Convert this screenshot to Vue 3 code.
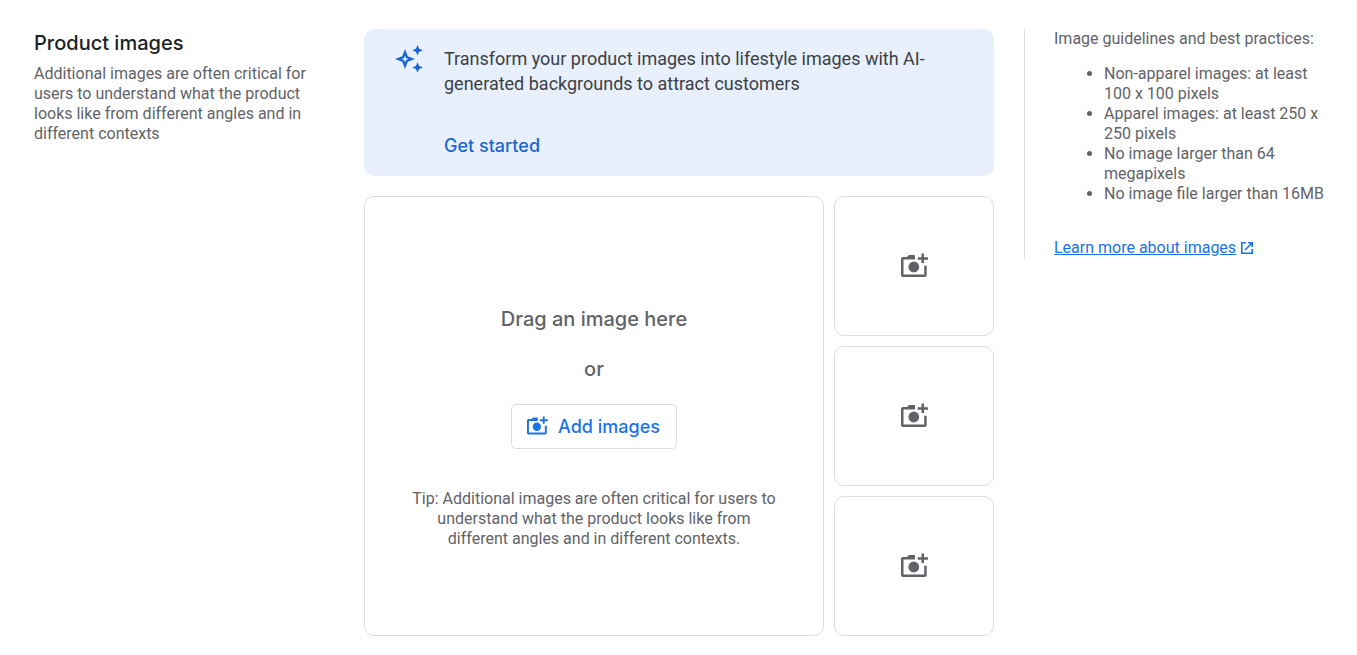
<script setup>
import { h } from 'vue'

const guidelines = [
  'Non-apparel images: at least 100 x 100 pixels',
  'Apparel images: at least 250 x 250 pixels',
  'No image larger than 64 megapixels',
  'No image file larger than 16MB',
]

const AddPhotoIcon = () =>
  h('svg', { viewBox: '0 0 28 26', 'aria-hidden': 'true' }, [
    h('path', {
      fill: 'currentColor',
      d: 'M3 4H7L9 2H15V6.5H3.5V21.5H24.2V12.7H26.7V22Q26.7 24 24.7 24H3Q1 24 1 22V6Q1 4 3 4Z',
    }),
    h('path', { fill: 'currentColor', d: 'M21.5 0.5H24V4.2H28V6.7H24V10H21.5V6.7H17.7V4.2H21.5Z' }),
    h('circle', { fill: 'currentColor', cx: 13.8, cy: 14, r: 5.4 }),
  ])
</script>

<template>
  <main class="page">
    <section class="intro">
      <h1>Product images</h1>
      <p>Additional images are often critical for users to understand what the product looks like from different angles and in different contexts</p>
    </section>

    <section class="content">
      <div class="banner">
        <svg class="sparkle" viewBox="0 0 30 30" aria-hidden="true">
          <path fill="currentColor" fill-rule="evenodd" d="M11 5L13.8 12.2L21 15L13.8 17.8L11 25L8.2 17.8L1 15L8.2 12.2ZM11 11.8L10 14L7.8 15L10 16L11 18.2L12 16L14.2 15L12 14Z" />
          <path fill="currentColor" d="M23.5 1L25.1 4.8L29 6.3L25.1 7.8L23.5 11.6L21.9 7.8L18.2 6.3L21.9 4.8ZM23.5 18.2L25.1 22L29 23.5L25.1 25L23.5 28.8L21.9 25L18.2 23.5L21.9 22Z" />
        </svg>
        <div class="banner-body">
          <p>Transform your product images into lifestyle images with AI-generated backgrounds to attract customers</p>
          <button type="button" class="start">Get started</button>
        </div>
      </div>

      <div class="uploads">
        <div class="drop">
          <p class="prompt">Drag an image here</p>
          <p class="prompt">or</p>
          <button type="button" class="add"><AddPhotoIcon class="icon-small" />Add images</button>
          <p class="tip">Tip: Additional images are often critical for users to understand what the product looks like from different angles and in different contexts.</p>
        </div>
        <button v-for="n in 3" :key="n" type="button" class="slot" :aria-label="`Add image ${n}`">
          <AddPhotoIcon class="icon-large" />
        </button>
      </div>
    </section>

    <aside class="guide">
      <p>Image guidelines and best practices:</p>
      <ul>
        <li v-for="item in guidelines" :key="item">{{ item }}</li>
      </ul>
      <a href="#"><span>Learn more about images</span><svg viewBox="0 0 14 14" aria-hidden="true"><path d="M6 1.8H1.8V12.2H12.2V8M8 1.8H12.2V6M12 2L5 9" fill="none" stroke="currentColor" stroke-width="1.6" /></svg></a>
    </aside>
  </main>
</template>

<style>
body {
  margin: 0;
  background: #fff;
}
</style>

<style scoped>
.page {
  display: grid;
  grid-template-columns: 300px minmax(0, 1fr) 303px;
  column-gap: 30px;
  align-items: start;
  padding: 29px 30px 19px 34px;
  font-family: Roboto, "Liberation Sans", sans-serif;
  font-size: 16px;
  line-height: 20px;
  color: #5f6368;
}
h1,
p,
ul {
  margin: 0;
}
button {
  padding: 0;
  border: 0;
  background: none;
  cursor: pointer;
}
h1,
.prompt,
.start,
.add {
  font-family: "Google Sans", Inter, sans-serif;
  font-weight: 500;
}
h1 {
  padding-top: 2px;
  font-size: 20px;
  line-height: 25px;
  color: #202124;
}
.intro p {
  margin-top: 8px;
  padding-right: 20px;
}
.banner {
  display: flex;
  gap: 20px;
  padding: 15px 30px;
  border-radius: 10px;
  background: #e8f0fe;
}
.sparkle {
  flex: none;
  width: 30px;
  height: 30px;
  color: #1967d2;
}
.banner-body {
  padding-top: 2px;
}
.banner-body p {
  font-size: 18px;
  line-height: 25px;
  color: #3c4043;
}
.start {
  display: block;
  margin-top: 35px;
  font-size: 18px;
  line-height: 30px;
  color: #1967d2;
}
.uploads {
  display: grid;
  grid-template-columns: minmax(0, 1fr) 160px;
  grid-auto-rows: minmax(140px, auto);
  gap: 10px;
  margin-top: 20px;
}
.drop,
.slot {
  box-sizing: border-box;
  border: 1px solid #dadce0;
  border-radius: 10px;
}
.drop {
  grid-row: span 3;
  display: flex;
  flex-direction: column;
  align-items: center;
  justify-content: center;
  padding: 20px 45px 0;
  text-align: center;
}
.prompt {
  margin-bottom: 20px;
  font-size: 20px;
  line-height: 30px;
}
.add {
  display: flex;
  align-items: center;
  gap: 10px;
  box-sizing: border-box;
  height: 45px;
  margin-bottom: 40px;
  padding: 0 16px 0 14px;
  border: 1px solid #dadce0;
  border-radius: 5px;
  font-size: 18px;
  color: #1a73e8;
}
.icon-small {
  width: 22px;
  height: 20px;
}
.slot {
  display: grid;
  place-items: center;
  color: #5f6368;
}
.icon-large {
  width: 28px;
  height: 26px;
}
.guide {
  box-sizing: border-box;
  min-height: 230px;
  padding-left: 29px;
  border-left: 1px solid #dadce0;
}
.guide ul {
  margin: 15px 0 34px;
  padding-left: 50px;
}
.guide a {
  display: flex;
  align-items: center;
  gap: 4px;
  color: #1a73e8;
  text-decoration: none;
}
.guide a span {
  text-decoration: underline;
}
.guide a svg {
  width: 14px;
  height: 14px;
}
</style>
